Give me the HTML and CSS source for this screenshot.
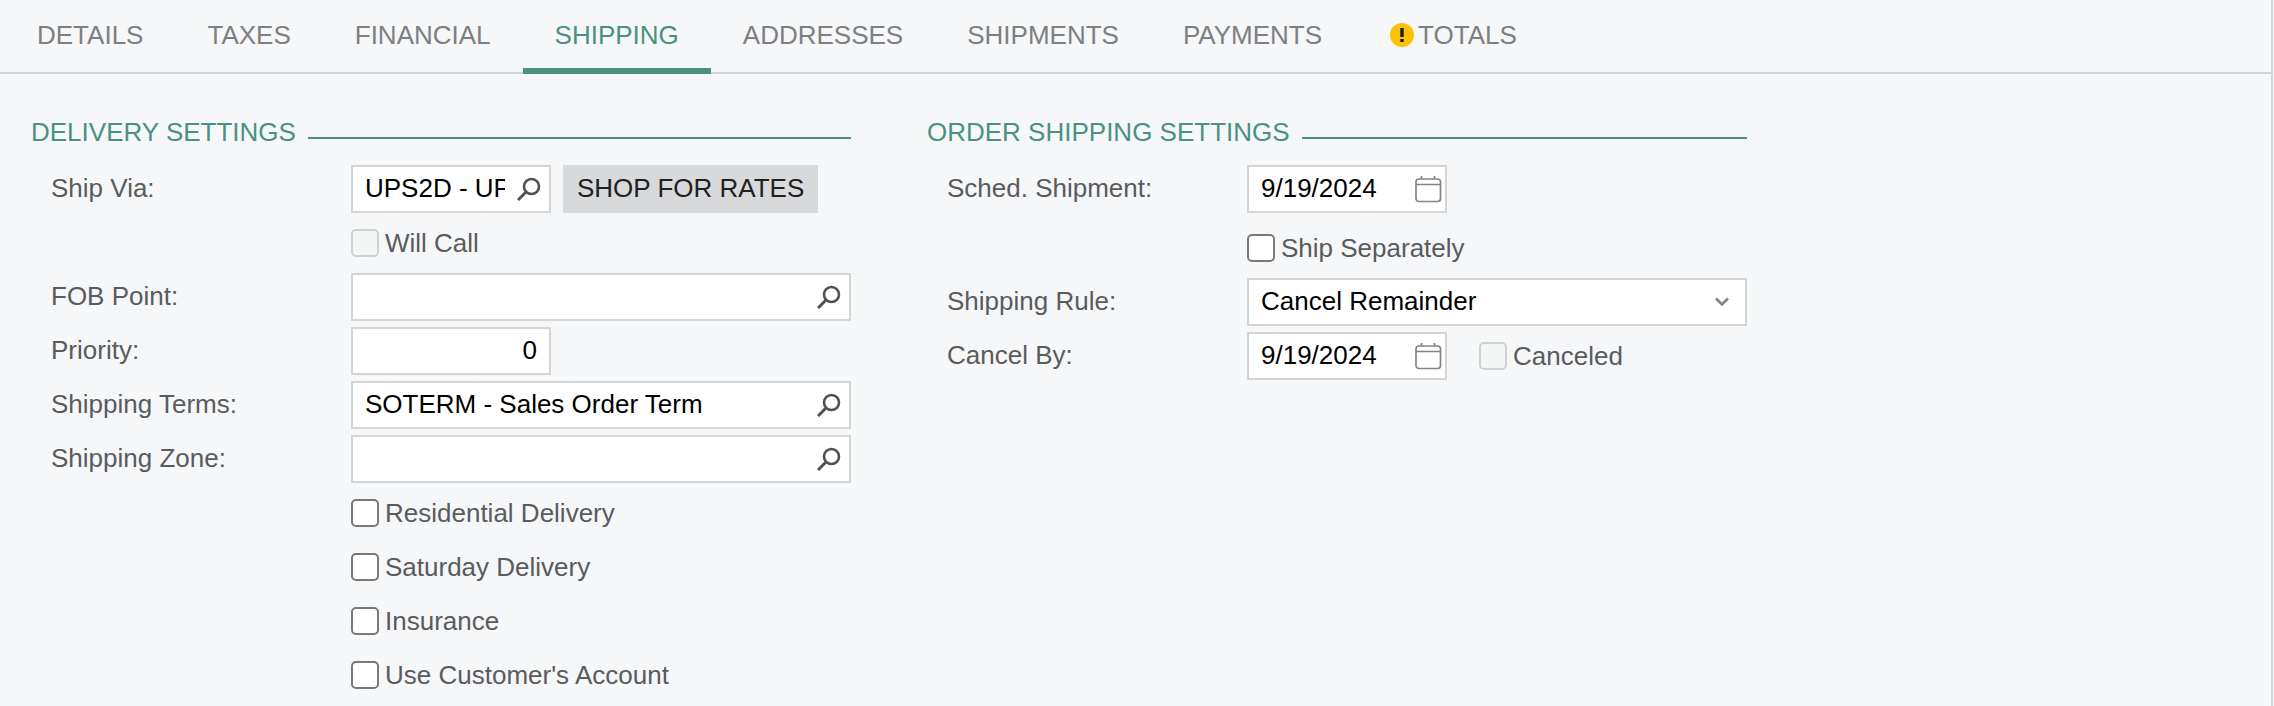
FILE: index.html
```
<!DOCTYPE html>
<html lang="en">
<head>
  <meta charset="UTF-8" />
  <meta name="viewport" content="width=device-width, initial-scale=1.0"/>
  <title>Sales Order - Shipping</title>
  <link rel="stylesheet" href="styles.css">
</head>
<body>

<!-- shared icons -->
<svg class="sprite" aria-hidden="true">
  <symbol id="icon-search" viewBox="0 0 24 24">
    <circle cx="14.5" cy="9.5" r="7.5" fill="none" stroke="currentColor" stroke-width="2.6"/>
    <path d="M9.5 14.5 L1 23" fill="none" stroke="currentColor" stroke-width="3"/>
  </symbol>
  <symbol id="icon-calendar" viewBox="0 0 28 28">
    <rect x="1" y="4" width="24.5" height="22.5" rx="3" fill="none" stroke="currentColor" stroke-width="1.7"/>
    <path d="M1 9.5 H25.5 M6.5 1 V4 M19.5 1 V4" fill="none" stroke="currentColor" stroke-width="1.7"/>
  </symbol>
</svg>

<div class="panel">
  <nav class="tabs">
    <button class="tab">DETAILS</button>
    <button class="tab">TAXES</button>
    <button class="tab">FINANCIAL</button>
    <button class="tab active">SHIPPING</button>
    <button class="tab">ADDRESSES</button>
    <button class="tab">SHIPMENTS</button>
    <button class="tab">PAYMENTS</button>
    <button class="tab">
      <svg class="warning" viewBox="0 0 24 24" aria-hidden="true">
        <circle cx="12" cy="12" r="12" fill="#ffc107"/>
        <path d="M12 5 V14 M12 16 V19" stroke="#1c1c1c" stroke-width="3.4" fill="none"/>
      </svg>TOTALS
    </button>
  </nav>

  <form class="sections">
    <section class="section">
      <h2>DELIVERY SETTINGS</h2>
      <div class="rows">
        <div class="row">
          <label class="label" for="shipVia">Ship Via:</label>
          <div class="field short">
            <input type="text" id="shipVia" value="UPS2D - UPS 2nd Day Air">
            <svg class="icon search"><use href="#icon-search"/></svg>
          </div>
          <button type="button" class="rates">SHOP FOR RATES</button>
        </div>
        <div class="row indent">
          <label class="check"><input type="checkbox" disabled>Will Call</label>
        </div>
        <div class="row">
          <label class="label" for="fobPoint">FOB Point:</label>
          <div class="field">
            <input type="text" id="fobPoint">
            <svg class="icon search"><use href="#icon-search"/></svg>
          </div>
        </div>
        <div class="row">
          <label class="label" for="priority">Priority:</label>
          <div class="field short">
            <input type="text" id="priority" class="number" value="0">
          </div>
        </div>
        <div class="row">
          <label class="label" for="shippingTerms">Shipping Terms:</label>
          <div class="field">
            <input type="text" id="shippingTerms" value="SOTERM - Sales Order Term">
            <svg class="icon search"><use href="#icon-search"/></svg>
          </div>
        </div>
        <div class="row">
          <label class="label" for="shippingZone">Shipping Zone:</label>
          <div class="field">
            <input type="text" id="shippingZone">
            <svg class="icon search"><use href="#icon-search"/></svg>
          </div>
        </div>
        <div class="row indent">
          <label class="check"><input type="checkbox">Residential Delivery</label>
        </div>
        <div class="row indent">
          <label class="check"><input type="checkbox">Saturday Delivery</label>
        </div>
        <div class="row indent">
          <label class="check"><input type="checkbox">Insurance</label>
        </div>
        <div class="row indent">
          <label class="check"><input type="checkbox">Use Customer's Account</label>
        </div>
      </div>
    </section>

    <section class="section">
      <h2>ORDER SHIPPING SETTINGS</h2>
      <div class="rows">
        <div class="row">
          <label class="label" for="schedShipment">Sched. Shipment:</label>
          <div class="field short">
            <input type="text" id="schedShipment" value="9/19/2024">
            <svg class="icon calendar"><use href="#icon-calendar"/></svg>
          </div>
        </div>
        <div class="row indent spaced">
          <label class="check"><input type="checkbox">Ship Separately</label>
        </div>
        <div class="row">
          <label class="label" for="shippingRule">Shipping Rule:</label>
          <div class="field">
            <select id="shippingRule">
              <option selected>Cancel Remainder</option>
              <option>Back Order Allowed</option>
              <option>Ship Complete</option>
            </select>
            <svg class="icon arrow" viewBox="0 0 14 10"><path d="M1 1.5 L7 7.5 L13 1.5" fill="none" stroke="currentColor" stroke-width="2.5"/></svg>
          </div>
        </div>
        <div class="row">
          <label class="label" for="cancelBy">Cancel By:</label>
          <div class="field short">
            <input type="text" id="cancelBy" value="9/19/2024">
            <svg class="icon calendar"><use href="#icon-calendar"/></svg>
          </div>
          <label class="check canceled"><input type="checkbox" disabled>Canceled</label>
        </div>
      </div>
    </section>
  </form>
</div>

<script>
  const tabs = document.querySelectorAll(".tab");

  tabs.forEach(tab => {
    tab.addEventListener("click", () => {
      tabs.forEach(t => t.classList.remove("active"));
      tab.classList.add("active");
    });
  });
</script>

</body>
</html>
```

FILE: styles.css
```
* { box-sizing: border-box; }

body {
  margin: 0;
  background: #f5f7f9;
  color: #5a5b5d;
  font-family: "Liberation Sans", Arial, sans-serif;
  font-size: 26px;
  line-height: 30px;
}

button, input, select { font: inherit; margin: 0; }

.sprite { position: absolute; width: 0; height: 0; }

.panel {
  min-height: 100vh;
  margin-right: 1px;
  border-right: 2px solid #d2d4d6;
}

/* tabs */
.tabs {
  display: flex;
  height: 74px;
  padding-left: 5px;
  box-shadow: inset 0 -2px #d2d4d6;
}

.tab {
  display: flex;
  align-items: center;
  gap: 4px;
  padding: 2px 32px 0;
  border: none;
  border-bottom: 6px solid transparent;
  background: none;
  color: #7e7f80;
  cursor: pointer;
}

.tab.active {
  color: #4a9182;
  border-bottom-color: #4a9182;
}

.warning { width: 24px; height: 24px; margin-left: 4px; }

/* sections */
.sections {
  display: flex;
  gap: 76px;
  padding: 43px 31px 0;
}

.section { flex: 0 1 820px; }

.section h2 {
  display: flex;
  gap: 12px;
  margin: 0 0 18px;
  color: #4a9182;
  font-size: 26px;
  font-weight: normal;
  line-height: 30px;
}

.section h2::after {
  content: "";
  flex: 1;
  height: 2px;
  margin-top: 20px;
  background: #4a9182;
}

.rows {
  display: flex;
  flex-direction: column;
  gap: 6px;
  padding-left: 20px;
}

.row {
  display: flex;
  align-items: center;
  min-height: 48px;
}

.row.indent { padding-left: 300px; }
.row.spaced { min-height: 53px; padding-top: 5px; }

.label { flex: 0 0 300px; padding-bottom: 2px; }

.field {
  flex: 1;
  display: flex;
  align-items: center;
  position: relative;
  height: 48px;
  padding: 0 12px;
  border: 2px solid #d2d4d6;
  background: #fff;
}

.field.short { flex: 0 0 200px; }

.field input, .field select {
  flex: 1;
  min-width: 0;
  width: 100%;
  padding: 0 0 2px;
  border: none;
  outline: none;
  background: none;
  color: #000;
  appearance: none;
}

.field .number { text-align: right; }

.icon { flex: none; }
.search { width: 24px; height: 24px; margin-left: 12px; margin-right: -4px; color: #505050; }
.calendar { width: 28px; height: 28px; margin-right: -10px; color: #858585; }
.arrow { width: 14px; height: 10px; margin-right: 4px; color: #808080; }

.rates {
  height: 48px;
  margin-left: 12px;
  padding: 0 14px 2px;
  border: none;
  background: #d8d9db;
  color: #1f2022;
  cursor: pointer;
}

.check {
  display: flex;
  align-items: center;
  gap: 6px;
}

.check.canceled { margin-left: 32px; }

.check input {
  width: 28px;
  height: 28px;
  border: 2px solid #77787a;
  border-radius: 5px;
  background: #fff;
  appearance: none;
}

.check input:checked { background: #4a9182; }

.check input:disabled {
  border-color: #cfd0d1;
  background: #f4f5f5;
}
```
